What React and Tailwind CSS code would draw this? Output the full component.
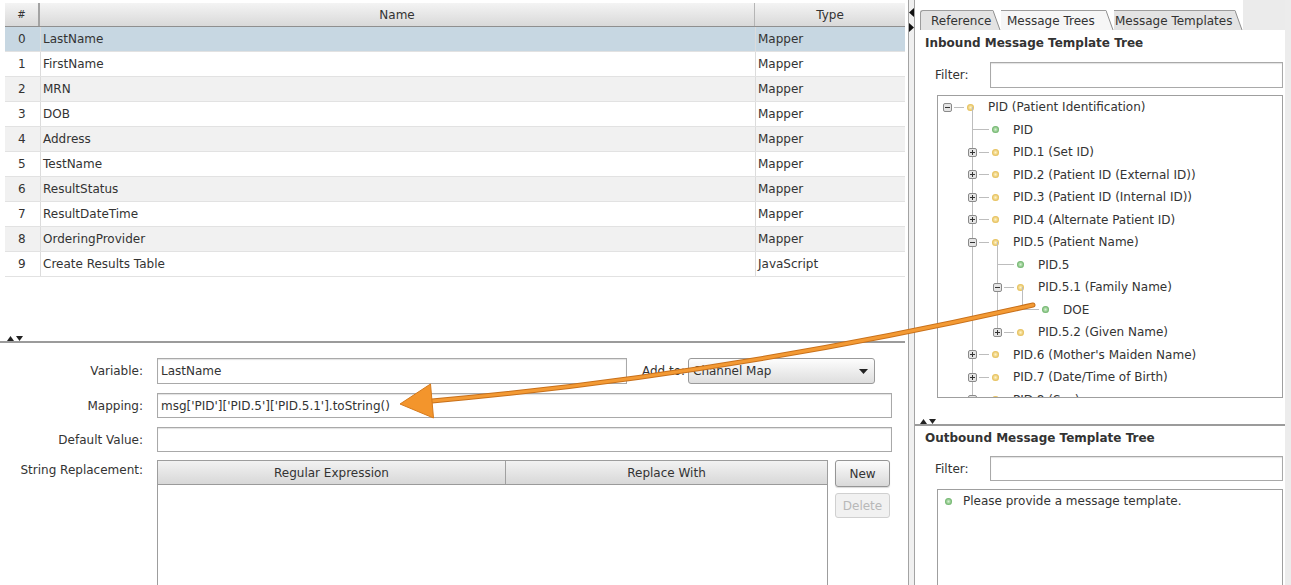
import clsx from 'clsx'

const steps = [
  ['0', 'LastName', 'Mapper'],
  ['1', 'FirstName', 'Mapper'],
  ['2', 'MRN', 'Mapper'],
  ['3', 'DOB', 'Mapper'],
  ['4', 'Address', 'Mapper'],
  ['5', 'TestName', 'Mapper'],
  ['6', 'ResultStatus', 'Mapper'],
  ['7', 'ResultDateTime', 'Mapper'],
  ['8', 'OrderingProvider', 'Mapper'],
  ['9', 'Create Results Table', 'JavaScript'],
]

const tree = [
  { l: 0, t: 'PID (Patient Identification)', exp: 'open', c: 'y' },
  { l: 1, t: 'PID', c: 'g' },
  { l: 1, t: 'PID.1 (Set ID)', exp: 'closed', c: 'y' },
  { l: 1, t: 'PID.2 (Patient ID (External ID))', exp: 'closed', c: 'y' },
  { l: 1, t: 'PID.3 (Patient ID (Internal ID))', exp: 'closed', c: 'y' },
  { l: 1, t: 'PID.4 (Alternate Patient ID)', exp: 'closed', c: 'y' },
  { l: 1, t: 'PID.5 (Patient Name)', exp: 'open', c: 'y' },
  { l: 2, t: 'PID.5', c: 'g' },
  { l: 2, t: 'PID.5.1 (Family Name)', exp: 'open', c: 'y' },
  { l: 3, t: 'DOE', c: 'g' },
  { l: 2, t: 'PID.5.2 (Given Name)', exp: 'closed', c: 'y' },
  { l: 1, t: "PID.6 (Mother's Maiden Name)", exp: 'closed', c: 'y' },
  { l: 1, t: 'PID.7 (Date/Time of Birth)', exp: 'closed', c: 'y' },
  { l: 1, t: 'PID.8 (Sex)', exp: 'closed', c: 'y' },
]

const indentW = ['w-[5px]', 'w-[30px]', 'w-[55px]', 'w-[80px]']
const guideLeft = ['left-[9px]', 'left-[34px]', 'left-[59px]', 'left-[84px]', 'left-[109px]']

// the visible list is cut off, level 1 keeps going below the box
function hasLaterSibling(i) {
  const L = tree[i].l
  for (let j = i + 1; j < tree.length; j++) {
    if (tree[j].l < L) return false
    if (tree[j].l === L) return true
  }
  return L === 1
}

function ancestorAt(i, a) {
  for (let j = i - 1; j >= 0; j--) {
    if (tree[j].l === a) return j
  }
  return i
}

function Dot({ color }) {
  return (
    <span
      className={clsx(
        'h-[7px] w-[7px] shrink-0 rounded-full',
        color === 'g'
          ? 'bg-[radial-gradient(circle,#d7f2d2_0%,#62ad5f_75%)]'
          : 'bg-[radial-gradient(circle,#fff4c8_0%,#e2b84a_75%)]'
      )}
    />
  )
}

function Expander({ open }) {
  return (
    <svg width="9" height="9" className="shrink-0">
      <rect x="0.5" y="0.5" width="8" height="8" rx="1.5" fill="#e4e4e4" stroke="#8a8a8a" />
      <path d="M2 4.5h5" stroke="#333" />
      {!open && <path d="M4.5 2v5" stroke="#333" />}
    </svg>
  )
}

function TreeRow({ i }) {
  const node = tree[i]
  const L = node.l
  const guides = []
  for (let a = 1; a <= L; a++) {
    if (a < L) {
      if (hasLaterSibling(ancestorAt(i, a))) guides.push([a, 'full'])
    } else {
      guides.push([a, hasLaterSibling(i) ? 'full' : 'top'])
    }
  }
  if (tree[i + 1] && tree[i + 1].l > L) guides.push([L + 1, 'bottom'])

  return (
    <div className="relative flex h-[22.5px] items-center whitespace-nowrap">
      {guides.map(([a, kind]) => (
        <span
          key={a + kind}
          className={clsx(
            'absolute w-px bg-[#bdbdbd]',
            guideLeft[a],
            kind === 'full' && 'top-0 bottom-0',
            kind === 'top' && 'top-0 h-1/2',
            kind === 'bottom' && 'bottom-0 h-1/2'
          )}
        />
      ))}
      <span className={clsx('shrink-0', indentW[L])} />
      {node.exp ? (
        <span className="relative">
          <Expander open={node.exp === 'open'} />
        </span>
      ) : (
        <span className="flex w-[9px] shrink-0 justify-end">
          <span className="h-px w-[5px] bg-[#bdbdbd]" />
        </span>
      )}
      <span className="flex w-[15px] shrink-0 items-center">
        <span className={clsx('h-px bg-[#bdbdbd]', node.exp ? 'ml-[2px] w-[10px]' : 'w-[12px]')} />
      </span>
      <Dot color={node.c} />
      <span className="ml-[14px]">{node.t}</span>
    </div>
  )
}

function Field({ className, children }) {
  return (
    <div
      className={clsx(
        'flex h-full items-center border border-[#a9a9a9] bg-white pl-[3px] shadow-[inset_0_1px_1px_rgba(0,0,0,0.12)]',
        className
      )}
    >
      {children}
    </div>
  )
}

function Label({ children, className }) {
  return <div className={clsx('w-[143px] shrink-0 text-right', className)}>{children}</div>
}

function SplitArrows() {
  return (
    <div className="flex gap-[2px]">
      <svg width="7" height="5">
        <polygon points="0,5 3.5,0 7,5" fill="#222" />
      </svg>
      <svg width="7" height="5">
        <polygon points="0,0 7,0 3.5,5" fill="#222" />
      </svg>
    </div>
  )
}

function LeftPane() {
  return (
    <div className="flex h-full w-[905px] shrink-0 flex-col overflow-hidden">
      <div className="h-[335px] shrink-0 pl-[5px] pt-[3px]">
        <div className="flex h-[24px] border-b border-[#8f8f8f] bg-gradient-to-b from-[#f4f4f4] to-[#d9d9d9]">
          <div className="flex w-[35px] items-center justify-center border-r-2 border-[#a3a3a3] text-[10px]">#</div>
          <div className="flex w-[715px] items-center justify-center border-r border-[#b5b5b5]">Name</div>
          <div className="flex flex-1 items-center justify-center">Type</div>
        </div>
        {steps.map(([n, name, type], i) => (
          <div
            key={n}
            className={clsx(
              'flex h-[25px] items-center border-b border-[#e2e2e2]',
              i === 0 ? 'bg-[#c7d7e2]' : i % 2 === 0 ? 'bg-[#f1f1f1]' : 'bg-white'
            )}
          >
            <div className="w-[35px] pl-[13px]">{n}</div>
            <div className="flex h-full w-[715px] items-center border-l border-[#dcdcdc] pl-[2px]">{name}</div>
            <div className="flex h-full flex-1 items-center border-l border-[#dcdcdc] pl-[2px]">{type}</div>
          </div>
        ))}
      </div>

      <div className="flex h-[8px] shrink-0 items-start border-b-2 border-[#9b9b9b] pl-[7px] pt-[1px]">
        <SplitArrows />
      </div>

      <div className="mt-[15px] flex h-[26px] shrink-0 items-center">
        <Label>Variable:</Label>
        <Field className="ml-[14px] w-[470px]">LastName</Field>
        <div className="w-[61px] shrink-0 pl-[15px]">Add to:</div>
        <div className="flex h-full w-[187px] items-center justify-between rounded-[3px] border border-[#9a9a9a] bg-gradient-to-b from-[#fdfdfd] to-[#dedede] pl-[4px] pr-[6px]">
          <span>Channel Map</span>
          <svg width="9" height="5">
            <polygon points="0,0 9,0 4.5,5" fill="#222" />
          </svg>
        </div>
      </div>

      <div className="mt-[9px] flex h-[25px] shrink-0 items-center">
        <Label>Mapping:</Label>
        <Field className="ml-[14px] w-[735px]">msg['PID']['PID.5']['PID.5.1'].toString()</Field>
      </div>

      <div className="mt-[9px] flex h-[25px] shrink-0 items-center">
        <Label>Default Value:</Label>
        <Field className="ml-[14px] w-[735px]" />
      </div>

      <div className="mt-[8px] flex min-h-0 flex-1 items-start">
        <Label className="pt-[1px]">String Replacement:</Label>
        <div className="ml-[14px] flex h-[140px] w-[671px] flex-col border border-b-0 border-[#9d9d9d] bg-white">
          <div className="flex h-[24px] border-b border-[#9a9a9a] bg-gradient-to-b from-[#f2f2f2] to-[#d8d8d8]">
            <div className="flex w-[348px] items-center justify-center border-r border-[#a0a0a0]">Regular Expression</div>
            <div className="flex flex-1 items-center justify-center">Replace With</div>
          </div>
        </div>
        <div className="ml-[7px] flex w-[55px] flex-col gap-[6px]">
          <div className="flex h-[27px] items-center justify-center rounded-[3px] border border-[#959595] bg-gradient-to-b from-[#fcfcfc] to-[#d9d9d9] shadow-[0_1px_1px_rgba(0,0,0,0.15)]">
            New
          </div>
          <div className="flex h-[25px] items-center justify-center rounded-[3px] border border-[#d0d0d0] bg-[#f1f1f1] text-[#b8b8b8]">
            Delete
          </div>
        </div>
      </div>
    </div>
  )
}

function PaneDivider() {
  return (
    <div className="flex w-[10px] shrink-0 pl-[3px]">
      <div className="flex h-full w-[7px] flex-col gap-[6px] border-x border-[#a3a3a3] bg-[#f0f0f0] pt-[8px]">
        <svg width="5" height="9">
          <polygon points="5,0 0,4.5 5,9" fill="#111" />
        </svg>
        <svg width="5" height="9">
          <polygon points="0,0 5,4.5 0,9" fill="#111" />
        </svg>
      </div>
    </div>
  )
}

function Tab({ label, active, className }) {
  return (
    <div className="flex h-[20px]">
      <div
        className={clsx(
          'flex items-center border-t border-[#9c9c9c]',
          active ? 'bg-[#f6f6f6]' : 'bg-[#e3e3e3]',
          className
        )}
      >
        {label}
      </div>
      <svg width="8" height="20" className="shrink-0">
        <polygon points="0,0.5 7,20 0,20" fill={active ? '#f6f6f6' : '#e3e3e3'} />
        <path d="M0 0.5 L7 20" stroke="#8e8e8e" fill="none" />
      </svg>
    </div>
  )
}

function RightPane() {
  return (
    <div className="flex h-full w-[370px] shrink-0 flex-col overflow-hidden">
      <div className="flex h-[30px] shrink-0 items-end">
        <div className="flex items-end pl-[5px]">
          <Tab label="Reference" className="w-[73px] rounded-tl-[3px] border-l pl-[10px]" />
          <Tab label="Message Trees" active className="w-[105px] pl-[6px]" />
          <Tab label="Message Templates" className="w-[121px] pl-[1px]" />
        </div>
        <div className="h-full flex-1 bg-[#ebebeb]" />
      </div>

      <div className="mt-[3px] flex h-[20px] shrink-0 items-center pl-[10px] font-bold">Inbound Message Template Tree</div>

      <div className="mt-[9px] flex h-[26px] shrink-0 items-center">
        <div className="w-[75px] shrink-0 pl-[20px]">Filter:</div>
        <Field className="w-[293px]" />
      </div>

      <div className="ml-[22px] mt-[7px] h-[303px] w-[346px] shrink-0 overflow-hidden border border-[#9f9f9f] bg-white">
        {tree.map((_, i) => (
          <TreeRow key={i} i={i} />
        ))}
      </div>

      <div className="mt-[20px] flex h-[8px] shrink-0 items-start border-b-2 border-[#9b9b9b] pl-[5px] pt-[1px]">
        <SplitArrows />
      </div>

      <div className="mt-[2px] flex h-[20px] shrink-0 items-center pl-[10px] font-bold">Outbound Message Template Tree</div>

      <div className="mt-[8px] flex h-[25px] shrink-0 items-center">
        <div className="w-[75px] shrink-0 pl-[20px]">Filter:</div>
        <Field className="w-[293px]" />
      </div>

      <div className="ml-[22px] mt-[8px] min-h-0 w-[346px] flex-1 border border-b-0 border-[#9f9f9f] bg-white">
        <div className="flex h-[22.5px] items-center">
          <span className="w-[7px] shrink-0" />
          <Dot color="g" />
          <span className="ml-[11px]">Please provide a message template.</span>
        </div>
      </div>
    </div>
  )
}

function OrangeArrow() {
  return (
    <svg className="pointer-events-none absolute left-0 top-0" width="1291" height="585">
      <path d="M1033 305 Q725 375 432 401" stroke="#c8701a" strokeWidth="5" fill="none" strokeLinecap="round" />
      <path d="M1033 305 Q725 375 432 401" stroke="#f39a34" strokeWidth="3" fill="none" strokeLinecap="round" />
      <polygon points="400,404 433.5,418 430.5,384" fill="#f3952c" stroke="#d57a1c" strokeWidth="1" strokeLinejoin="round" />
    </svg>
  )
}

export default function App() {
  return (
    <div className="relative flex h-[585px] w-[1291px] overflow-hidden bg-white font-['DejaVu_Sans',sans-serif] text-[12px] text-[#333]">
      <LeftPane />
      <PaneDivider />
      <RightPane />
      <div className="w-[6px] shrink-0 bg-[#ececec]" />
      <OrangeArrow />
    </div>
  )
}
